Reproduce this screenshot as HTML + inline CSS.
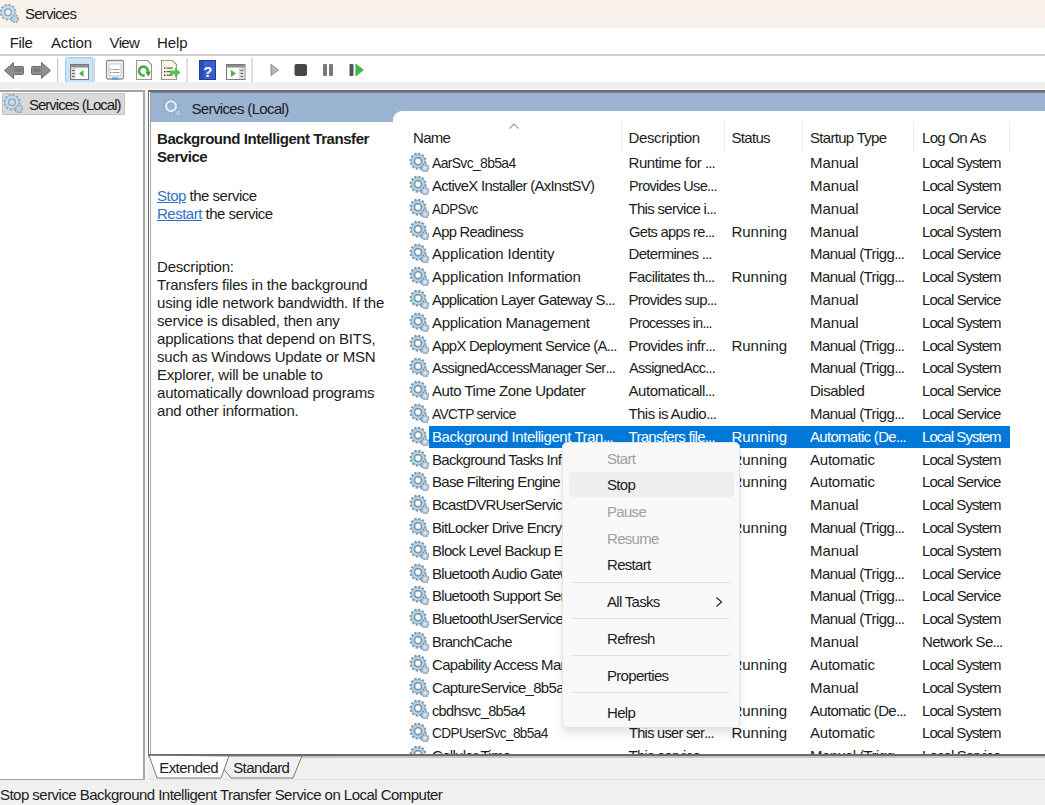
<!DOCTYPE html>
<html><head><meta charset="utf-8">
<style>
*{box-sizing:border-box}
html,body{margin:0;padding:0}
body{width:1045px;height:805px;overflow:hidden;position:relative;background:#F0F0F0;font-family:"Liberation Sans",sans-serif;font-size:15px;color:#1C1C1C}
.abs{position:absolute}
.t{position:absolute;white-space:pre;line-height:15px;font-size:15px;letter-spacing:-0.7px}
.w{color:#FFFFFF}
.el{letter-spacing:-0.9px}
.dis{color:#A0A0A0}
.msep{left:572px;width:157.5px;height:1px;background:#E2E2E2}
a{color:#2F72C4;text-decoration:underline}
.vsep{position:absolute;top:122px;width:1px;height:30px;background:#EBEBEB}
</style></head>
<body>
<svg width="0" height="0" style="position:absolute">
 <defs>
  <g id="gear">
   <circle cx="9" cy="9.2" r="7.5" fill="none" stroke="#7A94AA" stroke-width="2.0" stroke-dasharray="2.3 1.62"/>
   <circle cx="9" cy="9.2" r="4.5" fill="none" stroke="#BCDBED" stroke-width="4.3"/>
   <circle cx="9" cy="9.2" r="6.6" fill="none" stroke="#7F9AB0" stroke-width="0.8"/>
   <circle cx="9" cy="9.2" r="3.7" fill="none" stroke="#7892A8" stroke-width="1.5"/>
   <circle cx="16" cy="16" r="3.9" fill="none" stroke="#7A94AA" stroke-width="1.5" stroke-dasharray="1.6 1.45"/>
   <circle cx="16" cy="16" r="3.2" fill="#C4D5E8" stroke="#7F9AB2" stroke-width="0.7"/>
   <circle cx="16" cy="16" r="1.1" fill="#E2EBF4"/>
  </g>
  <g id="gearL">
   <circle cx="9" cy="9.2" r="7.4" fill="none" stroke="#8AA3B8" stroke-width="1.9" stroke-dasharray="2.2 1.7"/>
   <circle cx="9" cy="9.2" r="4.6" fill="none" stroke="#C2E0F0" stroke-width="4.2"/>
   <circle cx="9" cy="9.2" r="6.7" fill="none" stroke="#98B2C6" stroke-width="0.6"/>
   <circle cx="9" cy="9.2" r="3.4" fill="none" stroke="#8CA5B8" stroke-width="1.3"/>
   <circle cx="16" cy="16" r="3.8" fill="none" stroke="#8AA3B8" stroke-width="1.4" stroke-dasharray="1.6 1.45"/>
   <circle cx="16" cy="16" r="3.1" fill="#BBD3E6" stroke="#90A9BE" stroke-width="0.6"/>
  </g>
  <g id="gearB">
   <circle cx="9" cy="9.2" r="7.3" fill="none" stroke="#7C96B4" stroke-width="1.6" stroke-dasharray="1.8 2.1" opacity="0.55"/>
   <circle cx="9" cy="9.2" r="4.8" fill="none" stroke="#D6EEF8" stroke-width="2.4"/>
   <circle cx="9" cy="9.2" r="3.4" fill="none" stroke="#8CA0B8" stroke-width="0.8" opacity="0.6"/>
   <circle cx="16" cy="16" r="3.6" fill="none" stroke="#7C96B4" stroke-width="1.2" stroke-dasharray="1.4 1.5" opacity="0.6"/>
   <circle cx="16" cy="16" r="2.7" fill="#B4C9DC" opacity="0.8"/>
  </g>
 </defs>
</svg>

<!-- title bar -->
<div class="abs" style="left:0;top:0;width:1045px;height:27.5px;background:#F9F1EC"></div>
<svg class="abs" style="left:-1.3px;top:3.00px" width="20" height="20" viewBox="0 0 20 20"><use href="#gearL"/></svg>
<span class="t " style="left:25px;top:6.30px;letter-spacing:-0.8px">Services</span>

<!-- menu bar -->
<div class="abs" style="left:0;top:27.5px;width:1045px;height:26.5px;background:#FFFFFF"></div>
<div class="abs" style="left:0;top:54px;width:1045px;height:1.6px;background:#CDCDCD"></div>
<span class="t " style="left:9.8px;top:34.50px;letter-spacing:-0.4px">File</span>
<span class="t " style="left:51px;top:34.50px;letter-spacing:-0.14px">Action</span>
<span class="t " style="left:109.5px;top:34.50px;letter-spacing:-0.6px">View</span>
<span class="t " style="left:157px;top:34.50px;letter-spacing:-0.1px">Help</span>

<!-- toolbar -->
<div class="abs" style="left:0;top:55.5px;width:1045px;height:26.5px;background:#FFFFFF;overflow:hidden"><div class="abs" style="left:0;top:-0.5px;width:400px;height:27px">
 <svg class="abs" style="left:0;top:0" width="380" height="27" viewBox="0 55 380 27">
  <!-- back arrow -->
  <path d="M4.5 70.5 L13.5 62.5 L13.5 66.5 L22.5 66.5 Q23.5 66.5 23.5 67.5 L23.5 73.5 Q23.5 74.5 22.5 74.5 L13.5 74.5 L13.5 78.5 Z" fill="#8E8E8E" stroke="#6C6C6C" stroke-width="1" stroke-linejoin="round"/>
  <path d="M14.5 68.5 L22 68.5 L22 72 L14.5 72 Z" fill="#6F6F6F" opacity="0.6"/>
  <!-- forward arrow -->
  <path d="M50.5 70.5 L41.5 62.5 L41.5 66.5 L32.5 66.5 Q31.5 66.5 31.5 67.5 L31.5 73.5 Q31.5 74.5 32.5 74.5 L41.5 74.5 L41.5 78.5 Z" fill="#8E8E8E" stroke="#6C6C6C" stroke-width="1" stroke-linejoin="round"/>
  <path d="M33 68.5 L40.5 68.5 L40.5 72 L33 72 Z" fill="#6F6F6F" opacity="0.6"/>
  <rect x="57" y="58" width="1.2" height="24" fill="#C9C9C9"/>
  <!-- pressed button -->
  <rect x="65.5" y="57.5" width="27.5" height="25" rx="2" fill="#CCE4F7" stroke="#99C9EF" stroke-width="1"/>
  <rect x="94" y="58" width="1" height="24" fill="#D5D5D5"/>
  <rect x="70.5" y="64.5" width="18" height="15" fill="#F4F4F4" stroke="#7A7A7A" stroke-width="1"/>
  <rect x="71" y="65" width="17" height="2.5" fill="#8F8F8F"/>
  <rect x="71" y="68" width="4.5" height="11" fill="#DADADA"/>
  <rect x="72" y="70" width="2.5" height="0.9" fill="#555"/><rect x="72" y="73" width="2.5" height="0.9" fill="#555"/><rect x="72" y="76" width="2.5" height="0.9" fill="#555"/>
  <rect x="76" y="68.5" width="12" height="10.5" fill="#FFFFFF"/>
  <path d="M79 73.5 L83.5 70 L83.5 77 Z" fill="#49B549"/>
  <!-- properties icon -->
  <rect x="106.5" y="60.5" width="17" height="18.5" rx="1.5" fill="#F7F7F7" stroke="#8E8E8E" stroke-width="1.3"/>
  <rect x="109" y="64" width="12" height="12" fill="#FFFFFF" stroke="#B5B5B5" stroke-width="0.8"/>
  <rect x="110" y="69" width="1.2" height="1.2" fill="#3A8FD6"/><rect x="112.5" y="69" width="7" height="1" fill="#9A9A9A"/>
  <rect x="110" y="72" width="1.2" height="1.2" fill="#3A8FD6"/><rect x="112.5" y="72" width="7" height="1" fill="#9A9A9A"/>
  <rect x="112" y="77.5" width="6" height="2" fill="#35A5E0"/>
  <!-- refresh doc -->
  <path d="M136.5 60.5 L147.5 60.5 L151.5 64.5 L151.5 79.5 L136.5 79.5 Z" fill="#FBFBFB" stroke="#959595" stroke-width="1.1"/>
  <path d="M144.6 75.3 A4.4 4.4 0 1 1 147.8 71.6" fill="none" stroke="#46AE46" stroke-width="2.6"/>
  <path d="M145.3 71.6 L150.8 71.4 L148.4 76.6 Z" fill="#2F9F2F"/>
  <!-- export list -->
  <path d="M161.5 60.5 L172.5 60.5 L176.5 64.5 L176.5 79.5 L161.5 79.5 Z" fill="#FAF6E4" stroke="#959595" stroke-width="1.1"/>
  <rect x="164" y="67.5" width="1.4" height="1.4" fill="#333"/><rect x="166.5" y="67.5" width="6" height="1.2" fill="#555"/>
  <rect x="164" y="71" width="1.4" height="1.4" fill="#333"/><rect x="166.5" y="71" width="6" height="1.2" fill="#555"/>
  <rect x="164" y="74.5" width="1.4" height="1.4" fill="#333"/><rect x="166.5" y="74.5" width="6" height="1.2" fill="#555"/>
  <path d="M170 70.5 L175 70.5 L175 67.5 L180.5 72.5 L175 77.5 L175 74.5 L170 74.5 Z" fill="#52C452"/>
  <rect x="186.5" y="58" width="1.2" height="24" fill="#C9C9C9"/>
  <!-- help -->
  <rect x="199.5" y="60.5" width="16" height="19" fill="#3C5FCB" stroke="#1D3E9E" stroke-width="1"/>
  <rect x="200" y="61" width="4" height="18" fill="#223F9F" opacity="0.55"/>
  <text x="207.8" y="76.5" font-family="Liberation Sans" font-size="15" font-weight="bold" fill="#FFFFFF" text-anchor="middle">?</text>
  <!-- action pane -->
  <rect x="226.5" y="64.5" width="18.5" height="15" fill="#F4F4F4" stroke="#7A7A7A" stroke-width="1"/>
  <rect x="227" y="65" width="17.5" height="2.5" fill="#8F8F8F"/>
  <rect x="227" y="68" width="11" height="11" fill="#FFFFFF"/>
  <path d="M231 70 L236 73.5 L231 77 Z" fill="#49B549"/>
  <rect x="239" y="68" width="5.5" height="11" fill="#DADADA"/>
  <rect x="240.5" y="70" width="2.5" height="0.9" fill="#555"/><rect x="240.5" y="73" width="2.5" height="0.9" fill="#555"/><rect x="240.5" y="76" width="2.5" height="0.9" fill="#555"/>
  <rect x="251.5" y="58" width="1.2" height="24" fill="#C9C9C9"/>
  <!-- play -->
  <path d="M271 64.5 L278.5 70 L271 75.5 Z" fill="#B9B9B9" stroke="#8A8A8A" stroke-width="1" stroke-linejoin="round"/>
  <!-- stop -->
  <rect x="294.5" y="64" width="12.5" height="12" rx="2" fill="#474747"/>
  <!-- pause -->
  <rect x="323" y="64" width="4" height="12" rx="1" fill="#7A7A7A"/>
  <rect x="329" y="64" width="4" height="12" rx="1" fill="#7A7A7A"/>
  <!-- resume -->
  <rect x="349.5" y="64" width="4" height="12" rx="1" fill="#555555"/>
  <path d="M355.8 64 L363.5 70 L355.8 76 Z" fill="#40B940" stroke="#34A034" stroke-width="0.6"/>
 </svg>
</div></div>
<div class="abs" style="left:145px;top:90px;width:3px;height:690px;background:#F6F6F6"></div>
<div class="abs" style="left:0;top:88.8px;width:1045px;height:1px;background:#FAFAFA"></div>

<!-- left tree pane -->
<div class="abs" style="left:0;top:89.8px;width:145px;height:690px;background:#FFFFFF;border-top:2.2px solid #A2A2A2;border-right:2px solid #A8A8A8;border-bottom:1.5px solid #A4A4A4"></div>
<div class="abs" style="left:1.5px;top:93px;width:123.5px;height:21.5px;background:#D9D9D9;border:1px solid #C4C4C4"></div>
<svg class="abs" style="left:3.2px;top:92.60px" width="20" height="20" viewBox="0 0 20 20"><use href="#gearL"/></svg>
<span class="t " style="left:29px;top:97.30px;letter-spacing:-1.0px">Services (Local)</span>

<!-- right pane -->
<div class="abs" style="left:148px;top:89.8px;width:897px;height:666px;background:#FFFFFF;border-top:2px solid #6C6C6C;border-left:1.6px solid #6E6E6E;border-bottom:0"></div>
<div class="abs" style="left:150px;top:91.8px;width:895px;height:30.5px;background:#9BB4D2;border-top:0.8px solid #7B8792"></div>
<div class="abs" style="left:149.6px;top:91.8px;width:1.4px;height:662px;background:#A6A6A6"></div>
<div class="abs" style="left:393px;top:111px;width:652px;height:20px;background:#FFFFFF;border-top-left-radius:9px"></div>
<svg class="abs" style="left:161.6px;top:97.40px" width="20" height="20" viewBox="0 0 20 20"><use href="#gearB"/></svg>
<span class="t " style="left:191.5px;top:101.20px;letter-spacing:-0.65px">Services (Local)</span>

<!-- description pane -->
<span class="t " style="left:157px;top:130.50px;font-weight:bold;letter-spacing:-0.45px">Background Intelligent Transfer</span>
<span class="t " style="left:157px;top:148.50px;font-weight:bold;letter-spacing:-0.45px">Service</span>
<span class="t " style="left:157px;top:187.90px;letter-spacing:-0.5px"><a>Stop</a> the service</span>
<span class="t " style="left:157px;top:205.90px;letter-spacing:-0.5px"><a>Restart</a> the service</span>
<span class="t " style="left:157px;top:259.30px;letter-spacing:-0.2px">Description:</span>
<span class="t " style="left:157px;top:277.30px;letter-spacing:-0.2px">Transfers files in the background</span>
<span class="t " style="left:157px;top:295.30px;letter-spacing:-0.2px">using idle network bandwidth. If the</span>
<span class="t " style="left:157px;top:313.30px;letter-spacing:-0.2px">service is disabled, then any</span>
<span class="t " style="left:157px;top:331.30px;letter-spacing:-0.2px">applications that depend on BITS,</span>
<span class="t " style="left:157px;top:349.30px;letter-spacing:-0.2px">such as Windows Update or MSN</span>
<span class="t " style="left:157px;top:367.30px;letter-spacing:-0.2px">Explorer, will be unable to</span>
<span class="t " style="left:157px;top:385.30px;letter-spacing:-0.2px">automatically download programs</span>
<span class="t " style="left:157px;top:403.30px;letter-spacing:-0.2px">and other information.</span>

<!-- list header -->
<span class="t " style="left:413px;top:130.00px;">Name</span>
<svg class="abs" style="left:508px;top:122px" width="12" height="8" viewBox="0 0 12 8"><path d="M1.5 6.5 L6 2 L10.5 6.5" fill="none" stroke="#9A9A9A" stroke-width="1.1"/></svg>
<div class="vsep" style="left:621px"></div>
<span class="t " style="left:628.5px;top:130.00px;letter-spacing:-0.35px">Description</span>
<div class="vsep" style="left:724px"></div>
<span class="t " style="left:731.5px;top:130.00px;">Status</span>
<div class="vsep" style="left:802px"></div>
<span class="t " style="left:810px;top:130.00px;">Startup Type</span>
<div class="vsep" style="left:913px"></div>
<span class="t " style="left:922px;top:130.00px;">Log On As</span>
<div class="vsep" style="left:1009px"></div>

<!-- list rows -->
<div class="abs" style="left:393px;top:152px;width:652px;height:602.5px;overflow:hidden">
<div class="abs" style="left:-393px;top:-152px;width:1045px;height:805px">
<svg class="abs" style="left:409px;top:152.00px" width="20" height="20" viewBox="0 0 20 20"><use href="#gear"/></svg>
<span class="t " style="left:432px;top:155.10px;transform:scaleX(0.928);transform-origin:0 0">AarSvc_8b5a4</span>
<span class="t " style="left:628.5px;top:155.10px;letter-spacing:-0.44px">Runtime for <span class="el">...</span></span>
<span class="t " style="left:810px;top:155.10px;letter-spacing:-0.10px">Manual</span>
<span class="t " style="left:922px;top:155.10px;letter-spacing:-0.95px">Local System</span>
<svg class="abs" style="left:409px;top:174.81px" width="20" height="20" viewBox="0 0 20 20"><use href="#gear"/></svg>
<span class="t " style="left:432px;top:177.91px;transform:scaleX(0.991);transform-origin:0 0">ActiveX Installer (AxInstSV)</span>
<span class="t " style="left:628.5px;top:177.91px;transform:scaleX(0.966);transform-origin:0 0">Provides Use<span class="el">...</span></span>
<span class="t " style="left:810px;top:177.91px;letter-spacing:-0.10px">Manual</span>
<span class="t " style="left:922px;top:177.91px;letter-spacing:-0.95px">Local System</span>
<svg class="abs" style="left:409px;top:197.62px" width="20" height="20" viewBox="0 0 20 20"><use href="#gear"/></svg>
<span class="t " style="left:432px;top:200.72px;transform:scaleX(0.884);transform-origin:0 0">ADPSvc</span>
<span class="t " style="left:628.5px;top:200.72px;">This service i<span class="el">...</span></span>
<span class="t " style="left:810px;top:200.72px;letter-spacing:-0.10px">Manual</span>
<span class="t " style="left:922px;top:200.72px;letter-spacing:-0.90px">Local Service</span>
<svg class="abs" style="left:409px;top:220.43px" width="20" height="20" viewBox="0 0 20 20"><use href="#gear"/></svg>
<span class="t " style="left:432px;top:223.53px;transform:scaleX(0.983);transform-origin:0 0">App Readiness</span>
<span class="t " style="left:628.5px;top:223.53px;transform:scaleX(0.977);transform-origin:0 0">Gets apps re<span class="el">...</span></span>
<span class="t " style="left:731.5px;top:223.53px;letter-spacing:-0.03px">Running</span>
<span class="t " style="left:810px;top:223.53px;letter-spacing:-0.10px">Manual</span>
<span class="t " style="left:922px;top:223.53px;letter-spacing:-0.95px">Local System</span>
<svg class="abs" style="left:409px;top:243.24px" width="20" height="20" viewBox="0 0 20 20"><use href="#gear"/></svg>
<span class="t " style="left:432px;top:246.34px;letter-spacing:-0.18px">Application Identity</span>
<span class="t " style="left:628.5px;top:246.34px;">Determines <span class="el">...</span></span>
<span class="t " style="left:810px;top:246.34px;letter-spacing:-0.60px">Manual (Trigg<span class="el">...</span></span>
<span class="t " style="left:922px;top:246.34px;letter-spacing:-0.90px">Local Service</span>
<svg class="abs" style="left:409px;top:266.05px" width="20" height="20" viewBox="0 0 20 20"><use href="#gear"/></svg>
<span class="t " style="left:432px;top:269.15px;letter-spacing:-0.17px">Application Information</span>
<span class="t " style="left:628.5px;top:269.15px;letter-spacing:-0.59px">Facilitates th<span class="el">...</span></span>
<span class="t " style="left:731.5px;top:269.15px;letter-spacing:-0.03px">Running</span>
<span class="t " style="left:810px;top:269.15px;letter-spacing:-0.60px">Manual (Trigg<span class="el">...</span></span>
<span class="t " style="left:922px;top:269.15px;letter-spacing:-0.95px">Local System</span>
<svg class="abs" style="left:409px;top:288.86px" width="20" height="20" viewBox="0 0 20 20"><use href="#gear"/></svg>
<span class="t " style="left:432px;top:291.96px;transform:scaleX(0.994);transform-origin:0 0">Application Layer Gateway S<span class="el">...</span></span>
<span class="t " style="left:628.5px;top:291.96px;">Provides sup<span class="el">...</span></span>
<span class="t " style="left:810px;top:291.96px;letter-spacing:-0.10px">Manual</span>
<span class="t " style="left:922px;top:291.96px;letter-spacing:-0.90px">Local Service</span>
<svg class="abs" style="left:409px;top:311.67px" width="20" height="20" viewBox="0 0 20 20"><use href="#gear"/></svg>
<span class="t " style="left:432px;top:314.77px;letter-spacing:-0.34px">Application Management</span>
<span class="t " style="left:628.5px;top:314.77px;transform:scaleX(0.947);transform-origin:0 0">Processes in<span class="el">...</span></span>
<span class="t " style="left:810px;top:314.77px;letter-spacing:-0.10px">Manual</span>
<span class="t " style="left:922px;top:314.77px;letter-spacing:-0.95px">Local System</span>
<svg class="abs" style="left:409px;top:334.48px" width="20" height="20" viewBox="0 0 20 20"><use href="#gear"/></svg>
<span class="t " style="left:432px;top:337.58px;transform:scaleX(0.992);transform-origin:0 0">AppX Deployment Service (A<span class="el">...</span></span>
<span class="t " style="left:628.5px;top:337.58px;letter-spacing:-0.51px">Provides infr<span class="el">...</span></span>
<span class="t " style="left:731.5px;top:337.58px;letter-spacing:-0.03px">Running</span>
<span class="t " style="left:810px;top:337.58px;letter-spacing:-0.60px">Manual (Trigg<span class="el">...</span></span>
<span class="t " style="left:922px;top:337.58px;letter-spacing:-0.95px">Local System</span>
<svg class="abs" style="left:409px;top:357.29px" width="20" height="20" viewBox="0 0 20 20"><use href="#gear"/></svg>
<span class="t " style="left:432px;top:360.39px;transform:scaleX(0.968);transform-origin:0 0">AssignedAccessManager Ser<span class="el">...</span></span>
<span class="t " style="left:628.5px;top:360.39px;transform:scaleX(0.966);transform-origin:0 0">AssignedAcc<span class="el">...</span></span>
<span class="t " style="left:810px;top:360.39px;letter-spacing:-0.60px">Manual (Trigg<span class="el">...</span></span>
<span class="t " style="left:922px;top:360.39px;letter-spacing:-0.95px">Local System</span>
<svg class="abs" style="left:409px;top:380.10px" width="20" height="20" viewBox="0 0 20 20"><use href="#gear"/></svg>
<span class="t " style="left:432px;top:383.20px;letter-spacing:-0.46px">Auto Time Zone Updater</span>
<span class="t " style="left:628.5px;top:383.20px;letter-spacing:-0.45px">Automaticall<span class="el">...</span></span>
<span class="t " style="left:810px;top:383.20px;letter-spacing:-0.50px">Disabled</span>
<span class="t " style="left:922px;top:383.20px;letter-spacing:-0.90px">Local Service</span>
<svg class="abs" style="left:409px;top:402.91px" width="20" height="20" viewBox="0 0 20 20"><use href="#gear"/></svg>
<span class="t " style="left:432px;top:406.01px;transform:scaleX(0.918);transform-origin:0 0">AVCTP service</span>
<span class="t " style="left:628.5px;top:406.01px;letter-spacing:-0.57px">This is Audio<span class="el">...</span></span>
<span class="t " style="left:810px;top:406.01px;letter-spacing:-0.60px">Manual (Trigg<span class="el">...</span></span>
<span class="t " style="left:922px;top:406.01px;letter-spacing:-0.90px">Local Service</span>
<div class="abs" style="left:429px;top:425.92px;width:581px;height:21.7px;background:#0078D7"></div>
<svg class="abs" style="left:409px;top:425.72px" width="20" height="20" viewBox="0 0 20 20"><use href="#gear"/></svg>
<span class="t w" style="left:432px;top:428.82px;letter-spacing:-0.43px">Background Intelligent Tran<span class="el">...</span></span>
<span class="t w" style="left:628.5px;top:428.82px;">Transfers file<span class="el">...</span></span>
<span class="t w" style="left:731.5px;top:428.82px;letter-spacing:-0.03px">Running</span>
<span class="t w" style="left:810px;top:428.82px;">Automatic (De<span class="el">...</span></span>
<span class="t w" style="left:922px;top:428.82px;letter-spacing:-0.95px">Local System</span>
<svg class="abs" style="left:409px;top:448.53px" width="20" height="20" viewBox="0 0 20 20"><use href="#gear"/></svg>
<span class="t " style="left:432px;top:451.63px;">Background Tasks Infrastruc<span class="el">...</span></span>
<span class="t " style="left:628.5px;top:451.63px;">Windows inf<span class="el">...</span></span>
<span class="t " style="left:731.5px;top:451.63px;letter-spacing:-0.03px">Running</span>
<span class="t " style="left:810px;top:451.63px;letter-spacing:-0.22px">Automatic</span>
<span class="t " style="left:922px;top:451.63px;letter-spacing:-0.95px">Local System</span>
<svg class="abs" style="left:409px;top:471.34px" width="20" height="20" viewBox="0 0 20 20"><use href="#gear"/></svg>
<span class="t " style="left:432px;top:474.44px;">Base Filtering Engine</span>
<span class="t " style="left:628.5px;top:474.44px;">The Base Fil<span class="el">...</span></span>
<span class="t " style="left:731.5px;top:474.44px;letter-spacing:-0.03px">Running</span>
<span class="t " style="left:810px;top:474.44px;letter-spacing:-0.22px">Automatic</span>
<span class="t " style="left:922px;top:474.44px;letter-spacing:-0.90px">Local Service</span>
<svg class="abs" style="left:409px;top:494.15px" width="20" height="20" viewBox="0 0 20 20"><use href="#gear"/></svg>
<span class="t " style="left:432px;top:497.25px;">BcastDVRUserService_8b5a4</span>
<span class="t " style="left:628.5px;top:497.25px;">This user ser<span class="el">...</span></span>
<span class="t " style="left:810px;top:497.25px;letter-spacing:-0.10px">Manual</span>
<span class="t " style="left:922px;top:497.25px;letter-spacing:-0.95px">Local System</span>
<svg class="abs" style="left:409px;top:516.96px" width="20" height="20" viewBox="0 0 20 20"><use href="#gear"/></svg>
<span class="t " style="left:432px;top:520.06px;">BitLocker Drive Encryption <span class="el">...</span></span>
<span class="t " style="left:628.5px;top:520.06px;">BDESVC hos<span class="el">...</span></span>
<span class="t " style="left:731.5px;top:520.06px;letter-spacing:-0.03px">Running</span>
<span class="t " style="left:810px;top:520.06px;letter-spacing:-0.60px">Manual (Trigg<span class="el">...</span></span>
<span class="t " style="left:922px;top:520.06px;letter-spacing:-0.95px">Local System</span>
<svg class="abs" style="left:409px;top:539.77px" width="20" height="20" viewBox="0 0 20 20"><use href="#gear"/></svg>
<span class="t " style="left:432px;top:542.87px;">Block Level Backup Engine <span class="el">...</span></span>
<span class="t " style="left:628.5px;top:542.87px;">The WBENGI<span class="el">...</span></span>
<span class="t " style="left:810px;top:542.87px;letter-spacing:-0.10px">Manual</span>
<span class="t " style="left:922px;top:542.87px;letter-spacing:-0.95px">Local System</span>
<svg class="abs" style="left:409px;top:562.58px" width="20" height="20" viewBox="0 0 20 20"><use href="#gear"/></svg>
<span class="t " style="left:432px;top:565.68px;">Bluetooth Audio Gateway Se<span class="el">...</span></span>
<span class="t " style="left:628.5px;top:565.68px;">Service sup<span class="el">...</span></span>
<span class="t " style="left:810px;top:565.68px;letter-spacing:-0.60px">Manual (Trigg<span class="el">...</span></span>
<span class="t " style="left:922px;top:565.68px;letter-spacing:-0.90px">Local Service</span>
<svg class="abs" style="left:409px;top:585.39px" width="20" height="20" viewBox="0 0 20 20"><use href="#gear"/></svg>
<span class="t " style="left:432px;top:588.49px;">Bluetooth Support Service</span>
<span class="t " style="left:628.5px;top:588.49px;">The Bluetoo<span class="el">...</span></span>
<span class="t " style="left:810px;top:588.49px;letter-spacing:-0.60px">Manual (Trigg<span class="el">...</span></span>
<span class="t " style="left:922px;top:588.49px;letter-spacing:-0.90px">Local Service</span>
<svg class="abs" style="left:409px;top:608.20px" width="20" height="20" viewBox="0 0 20 20"><use href="#gear"/></svg>
<span class="t " style="left:432px;top:611.30px;">BluetoothUserService_8b5a4</span>
<span class="t " style="left:628.5px;top:611.30px;">The Bluetoo<span class="el">...</span></span>
<span class="t " style="left:810px;top:611.30px;letter-spacing:-0.60px">Manual (Trigg<span class="el">...</span></span>
<span class="t " style="left:922px;top:611.30px;letter-spacing:-0.95px">Local System</span>
<svg class="abs" style="left:409px;top:631.01px" width="20" height="20" viewBox="0 0 20 20"><use href="#gear"/></svg>
<span class="t " style="left:432px;top:634.11px;transform:scaleX(0.959);transform-origin:0 0">BranchCache</span>
<span class="t " style="left:628.5px;top:634.11px;">This service <span class="el">...</span></span>
<span class="t " style="left:810px;top:634.11px;letter-spacing:-0.10px">Manual</span>
<span class="t " style="left:922px;top:634.11px;">Network Se<span class="el">...</span></span>
<svg class="abs" style="left:409px;top:653.82px" width="20" height="20" viewBox="0 0 20 20"><use href="#gear"/></svg>
<span class="t " style="left:432px;top:656.92px;">Capability Access Manager <span class="el">...</span></span>
<span class="t " style="left:628.5px;top:656.92px;">Provides fac<span class="el">...</span></span>
<span class="t " style="left:731.5px;top:656.92px;letter-spacing:-0.03px">Running</span>
<span class="t " style="left:810px;top:656.92px;letter-spacing:-0.22px">Automatic</span>
<span class="t " style="left:922px;top:656.92px;letter-spacing:-0.95px">Local System</span>
<svg class="abs" style="left:409px;top:676.63px" width="20" height="20" viewBox="0 0 20 20"><use href="#gear"/></svg>
<span class="t " style="left:432px;top:679.73px;">CaptureService_8b5a4</span>
<span class="t " style="left:628.5px;top:679.73px;">Enables opti<span class="el">...</span></span>
<span class="t " style="left:810px;top:679.73px;letter-spacing:-0.10px">Manual</span>
<span class="t " style="left:922px;top:679.73px;letter-spacing:-0.95px">Local System</span>
<svg class="abs" style="left:409px;top:699.44px" width="20" height="20" viewBox="0 0 20 20"><use href="#gear"/></svg>
<span class="t " style="left:432px;top:702.54px;transform:scaleX(0.972);transform-origin:0 0">cbdhsvc_8b5a4</span>
<span class="t " style="left:628.5px;top:702.54px;">This user ser<span class="el">...</span></span>
<span class="t " style="left:731.5px;top:702.54px;letter-spacing:-0.03px">Running</span>
<span class="t " style="left:810px;top:702.54px;">Automatic (De<span class="el">...</span></span>
<span class="t " style="left:922px;top:702.54px;letter-spacing:-0.95px">Local System</span>
<svg class="abs" style="left:409px;top:722.25px" width="20" height="20" viewBox="0 0 20 20"><use href="#gear"/></svg>
<span class="t " style="left:432px;top:725.35px;transform:scaleX(0.909);transform-origin:0 0">CDPUserSvc_8b5a4</span>
<span class="t " style="left:628.5px;top:725.35px;transform:scaleX(0.969);transform-origin:0 0">This user ser<span class="el">...</span></span>
<span class="t " style="left:731.5px;top:725.35px;letter-spacing:-0.03px">Running</span>
<span class="t " style="left:810px;top:725.35px;letter-spacing:-0.22px">Automatic</span>
<span class="t " style="left:922px;top:725.35px;letter-spacing:-0.95px">Local System</span>
<svg class="abs" style="left:409px;top:745.06px" width="20" height="20" viewBox="0 0 20 20"><use href="#gear"/></svg>
<span class="t " style="left:432px;top:748.16px;">Cellular Time</span>
<span class="t " style="left:628.5px;top:748.16px;">This service <span class="el">...</span></span>
<span class="t " style="left:810px;top:748.16px;letter-spacing:-0.60px">Manual (Trigg<span class="el">...</span></span>
<span class="t " style="left:922px;top:748.16px;letter-spacing:-0.90px">Local Service</span>
</div>
</div>

<!-- context menu -->
<div class="abs" style="left:561.8px;top:442.2px;width:178px;height:285.5px;background:#F9F9F9;border:1px solid #E3E3E3;border-radius:5px;box-shadow:0 6px 9px rgba(0,0,0,0.11)"></div>
<div class="abs" style="left:569px;top:472px;width:165px;height:25px;background:#EEEEEE;border-radius:4px"></div>
<span class="t dis" style="left:607px;top:451.00px;">Start</span>
<span class="t " style="left:607px;top:477.00px;">Stop</span>
<span class="t dis" style="left:607px;top:504.00px;">Pause</span>
<span class="t dis" style="left:607px;top:531.20px;">Resume</span>
<span class="t " style="left:607px;top:556.70px;">Restart</span>
<span class="t " style="left:607px;top:594.00px;">All Tasks</span>
<span class="t " style="left:607px;top:631.20px;">Refresh</span>
<span class="t " style="left:607px;top:668.20px;">Properties</span>
<span class="t " style="left:607px;top:705.30px;">Help</span>
<svg class="abs" style="left:713px;top:595px" width="12" height="14" viewBox="0 0 12 14"><path d="M3.5 2.5 L8.5 7 L3.5 11.5" fill="none" stroke="#333" stroke-width="1.3"/></svg>
<div class="abs msep" style="top:581.5px"></div>
<div class="abs msep" style="top:618px"></div>
<div class="abs msep" style="top:655px"></div>
<div class="abs msep" style="top:692px"></div>

<!-- tabs -->
<div class="abs" style="left:148px;top:754.2px;width:897px;height:1.4px;background:#6A6A6A"></div>
<div class="abs" style="left:148px;top:755.5px;width:897px;height:2px;background:#C4C4C4"></div>
<div class="abs" style="left:148px;top:778.8px;width:897px;height:1px;background:#E2E2E2"></div>
<svg class="abs" style="left:140px;top:754px" width="200" height="28" viewBox="0 0 200 28">
 <polygon points="73,2 91,24 153,24 162,2" fill="#F0F0F0" stroke="#7A7A7A" stroke-width="1"/>
 <polygon points="9,1 17,24 81,24 89,2" fill="#FFFFFF" stroke="#7A7A7A" stroke-width="1"/>
 <line x1="8" y1="0.9" x2="200" y2="0.9" stroke="#6A6A6A" stroke-width="1.4"/>
</svg>
<span class="t " style="left:159.3px;top:760.00px;letter-spacing:-0.6px">Extended</span>
<span class="t " style="left:233.2px;top:760.00px;letter-spacing:-0.6px">Standard</span>

<!-- status bar -->
<span class="t " style="left:0px;top:787.20px;letter-spacing:-0.53px">Stop service Background Intelligent Transfer Service on Local Computer</span>

</body></html>
